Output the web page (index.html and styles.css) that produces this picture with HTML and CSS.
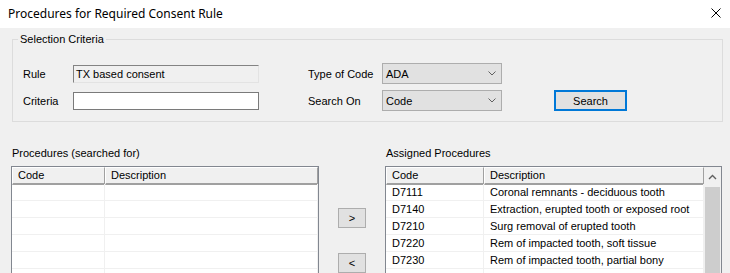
FILE: index.html
```html
<!DOCTYPE html>
<html>
<head>
<meta charset="utf-8">
	<title>Procedures for Required Consent Rule</title>

	<link rel="stylesheet" href="styles.css">
</head>
<body>

<div class="window">
	<div class="titlebar">
		<span class="title">Procedures for Required Consent Rule</span>
		<svg class="close" width="10" height="10" viewBox="0 0 10 10">
			<path d="M0.5 0.5 L9.5 9.5 M9.5 0.5 L0.5 9.5" stroke="#000" stroke-width="1" fill="none"/>
		</svg>
	</div>

	<fieldset class="group">
		<legend>Selection Criteria</legend>
		<div class="criteria">
			<span class="lbl">Rule</span>
			<div class="textbox readonly">TX based consent</div>
			<span></span>
			<span class="lbl">Type of Code</span>
			<div class="combo"><span>ADA</span><svg width="8" height="5" viewBox="0 0 8 5"><path d="M0.5 0.5 L4 4 L7.5 0.5" stroke="#606060" fill="none"/></svg></div>
			<span></span>
			<span></span>

			<span class="lbl">Criteria</span>
			<div class="textbox"></div>
			<span></span>
			<span class="lbl">Search On</span>
			<div class="combo"><span>Code</span><svg width="8" height="5" viewBox="0 0 8 5"><path d="M0.5 0.5 L4 4 L7.5 0.5" stroke="#606060" fill="none"/></svg></div>
			<span></span>
			<div class="btn default">Search</div>
		</div>
	</fieldset>

	<div class="lists">
		<div class="pane pane-left">
			<div class="cap">Procedures (searched for)</div>
			<div class="list">
				<div class="grid cols-left">
					<div class="hcell">Code</div><div class="hcell">Description</div>
					<div class="cell"></div><div class="cell"></div>
					<div class="cell"></div><div class="cell"></div>
					<div class="cell"></div><div class="cell"></div>
					<div class="cell"></div><div class="cell"></div>
					<div class="cell"></div><div class="cell"></div>
					<div class="cell"></div><div class="cell"></div>
				</div>
			</div>
		</div>

		<div class="movers">
			<div class="btn small">&gt;</div>
			<div class="btn small">&lt;</div>
		</div>

		<div class="pane pane-right">
			<div class="cap">Assigned Procedures</div>
			<div class="list">
				<div class="grid cols-right">
					<div class="hcell">Code</div><div class="hcell">Description</div>
					<div class="cell">D7111</div><div class="cell">Coronal remnants - deciduous tooth</div>
					<div class="cell">D7140</div><div class="cell">Extraction, erupted tooth or exposed root</div>
					<div class="cell">D7210</div><div class="cell">Surg removal of erupted tooth</div>
					<div class="cell">D7220</div><div class="cell">Rem of impacted tooth, soft tissue</div>
					<div class="cell">D7230</div><div class="cell">Rem of impacted tooth, partial bony</div>
					<div class="cell"></div><div class="cell"></div>
				</div>
				<div class="scrollbar">
					<div class="arrow">
						<svg width="9" height="6" viewBox="0 0 9 6"><path d="M1 5 L4.5 1.5 L8 5" stroke="#606060" stroke-width="1.4" fill="none"/></svg>
					</div>
					<div class="thumb"></div>
				</div>
			</div>
		</div>
	</div>
</div>

</body>
</html>
```

FILE: styles.css
```css
body{
	margin: 0;
	background: #f0f0f0;
	font-family: "Liberation Sans", Arial, sans-serif;
	font-size: 11px;
	color: #000;
}
.window{
	width: 730px;
	height: 273px;
	overflow: hidden;
}

/* title bar */
.titlebar{
	height: 28px;
	background: #fff;
	display: flex;
	align-items: center;
	justify-content: space-between;
	padding: 0 9px 2px 8px;
	box-sizing: border-box;
}
.title{
	font-family: "Segoe UI", "Noto Sans", sans-serif;
	font-size: 12px;
}

/* selection criteria */
.group{
	margin: 5px 7px 0 12px;
	padding: 17px 10px 10px 10px;
	border: 1px solid #dcdcdc;
	min-width: 0;
}
.group legend{
	margin-left: -5px;
	padding: 0 2px;
	line-height: 13px;
}
.criteria{
	display: grid;
	grid-template-columns: 50px 186px 49px 74px 120px 52px 73px;
	grid-template-rows: 21px 21px;
	row-gap: 6px;
	align-items: center;
}
.textbox{
	height: 18px;
	border: 1px solid #7a7a7a;
	background: #fff;
	box-sizing: border-box;
	padding: 1px 2px;
	line-height: 14px;
}
.textbox.readonly{
	background: #f0f0f0;
	border-color: #838383 #e3e3e3 #e3e3e3 #838383;
	height: 18px;
}
.combo{
	height: 21px;
	background: #e1e1e1;
	border: 1px solid #adadad;
	box-sizing: border-box;
	display: flex;
	align-items: center;
	justify-content: space-between;
	padding: 0 5px 0 3px;
}
.btn{
	background: #e1e1e1;
	border: 1px solid #adadad;
	box-sizing: border-box;
	display: flex;
	align-items: center;
	justify-content: center;
}
.btn.default{
	height: 21px;
	border: 2px solid #0078d7;
}

/* lists */
.lists{
	display: flex;
	margin-top: 25px;
	padding-left: 11px;
}
.cap{
	line-height: 13px;
	margin: 0 0 6px 1px;
}
.pane-left{
	width: 308px;
}
.pane-right{
	width: 337px;
}
.list{
	border: 1px solid #828790;
	background: #fff;
	height: 200px;
	display: flex;
}
.grid{
	display: grid;
	grid-auto-rows: 17px;
	flex: 1;
	align-content: start;
}
.cols-left{
	grid-template-columns: 93px 1fr;
}
.cols-right{
	grid-template-columns: 98px 1fr;
}
.hcell{
	background: #f0f0f0;
	border-top: 1px solid #fff;
	border-left: 1px solid #fff;
	border-right: 1px solid #a0a0a0;
	border-bottom: 2px solid #a0a0a0;
	padding: 1px 0 0 5px;
	line-height: 13px;
	box-sizing: border-box;
	height: 18px;
}
.cell{
	border-bottom: 1px solid #f0f0f0;
	border-right: 1px solid #f0f0f0;
	padding: 1px 0 0 6px;
	line-height: 15px;
	white-space: nowrap;
}
.scrollbar{
	width: 17px;
	background: #f0f0f0;
	display: flex;
	flex-direction: column;
}
.arrow{
	height: 19px;
	display: flex;
	align-items: center;
	justify-content: center;
}
.thumb{
	flex: 1;
	margin: 1px 1px 0 1px;
	background: #cdcdcd;
}

.movers{
	width: 28px;
	margin: 0 19px;
	padding-top: 61px;
	display: flex;
	flex-direction: column;
	gap: 25px;
}
.btn.small{
	height: 20px;
}
```
